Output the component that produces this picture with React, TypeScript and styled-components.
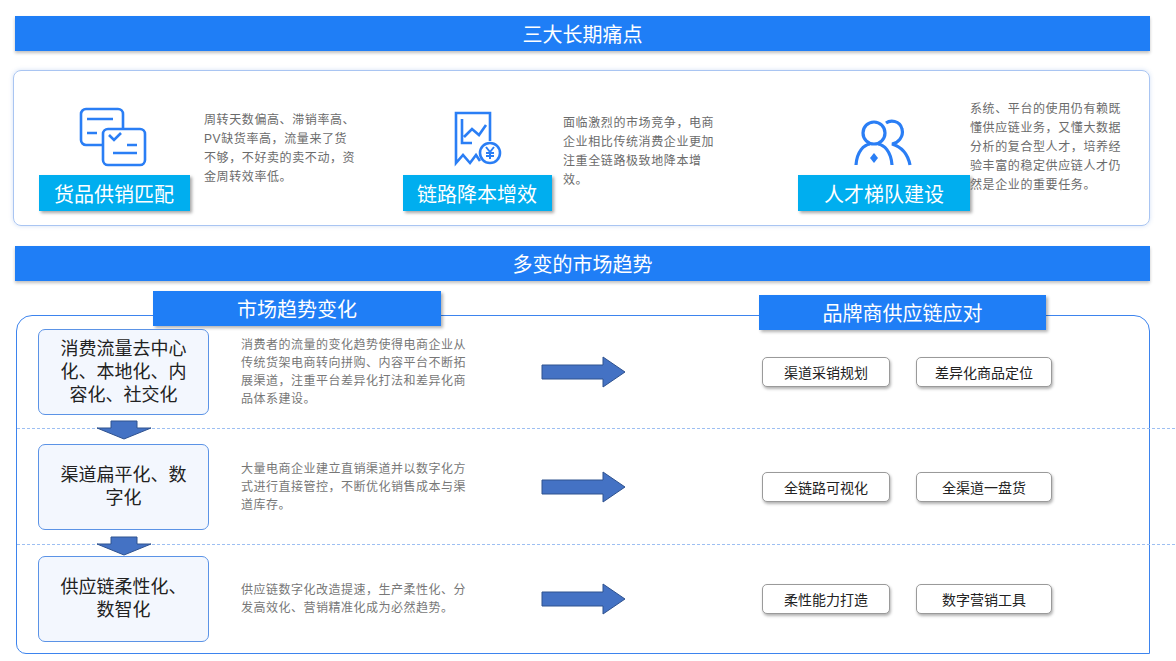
import styled, { createGlobalStyle } from 'styled-components';

const Global = createGlobalStyle`
  html, body { margin: 0; padding: 0; background: #fff; }
  body { font-family: "Liberation Sans", "Noto Sans CJK SC", sans-serif; width: 1176px; height: 661px; overflow: hidden; }
`;

const Page = styled.div`
  padding: 16px 26px 0 13px;
  display: flex;
  flex-direction: column;
`;

const Banner = styled.div<{ $top: number }>`
  margin: ${({ $top }) => $top}px 0 0 2px;
  height: 35px;
  background: #1f7ef6;
  color: #fff;
  font-size: 20px;
  display: flex;
  align-items: center;
  justify-content: center;
  box-shadow: 0 2px 3px rgba(0, 0, 0, 0.25);
`;

const PainPanel = styled.div`
  margin-top: 19px;
  height: 154px;
  border: 1px solid #a9c5f2;
  border-radius: 8px;
  box-shadow: 0 0 4px rgba(80, 130, 220, 0.25);
  display: grid;
  grid-template-columns: 363px 397px 1fr;
  padding-left: 24px;
`;

const PainItem = styled.div<{ $gap: number }>`
  display: flex;
  gap: ${({ $gap }) => $gap}px;
`;

const IconCol = styled.div<{ $w: number }>`
  width: ${({ $w }) => $w}px;
  flex-shrink: 0;
  display: flex;
  flex-direction: column;
  align-items: center;
  justify-content: flex-end;
  padding-bottom: 14px;
`;

const IconWrap = styled.div`
  height: 66px;
  display: flex;
  align-items: flex-end;
  margin-bottom: 8px;
`;

const Label = styled.div<{ $w: number }>`
  width: ${({ $w }) => $w}px;
  height: 36px;
  background: #00aeef;
  color: #fff;
  font-size: 20px;
  display: flex;
  align-items: center;
  justify-content: center;
  box-shadow: 2px 2px 3px rgba(0, 0, 0, 0.35);
`;

const PainText = styled.p<{ $top: number; $w: number }>`
  margin: ${({ $top }) => $top}px 0 0;
  width: ${({ $w }) => $w}px;
  font-size: 12px;
  letter-spacing: 0.6px;
  line-height: 19px;
  color: #6b6b6b;
`;

const TrendPanel = styled.div`
  position: relative;
  margin: 34px 0 8px 3px;
  border: 1px solid #3d84ee;
  border-radius: 16px 16px 0 10px;
  height: 337px;
  display: flex;
  flex-direction: column;
`;

const Tab = styled.div<{ $left: number; $top: number; $w: number }>`
  position: absolute;
  left: ${({ $left }) => $left}px;
  top: ${({ $top }) => $top}px;
  width: ${({ $w }) => $w}px;
  height: 35px;
  background: #1f7ef6;
  color: #fff;
  font-size: 20px;
  display: flex;
  align-items: center;
  justify-content: center;
  box-shadow: 2px 2px 3px rgba(0, 0, 0, 0.3);
`;

const Row = styled.div<{ $h: number; $dashed: boolean }>`
  position: relative;
  height: ${({ $h }) => $h}px;
  display: grid;
  grid-template-columns: 171px 332px 84px 1fr;
  align-items: center;
  padding-left: 21px;
  border-bottom: ${({ $dashed }) => ($dashed ? '1px dashed #9dbff2' : 'none')};
  margin-right: -26px;
`;

const TrendBox = styled.div`
  height: 84px;
  border: 1px solid #5b93e6;
  border-radius: 7px;
  background: #f3f7fe;
  font-size: 18px;
  line-height: 23px;
  color: #222;
  display: flex;
  align-items: center;
  justify-content: center;
  text-align: center;
  padding: 0 14px;
`;

const TrendText = styled.p`
  margin: 0 0 0 32px;
  font-size: 12px;
  letter-spacing: 0.5px;
  line-height: 18px;
  color: #777;
  width: 232px;
`;

const Answers = styled.div`
  display: flex;
  gap: 26px;
  padding-left: 137px;
`;

const Chip = styled.div<{ $w: number }>`
  width: ${({ $w }) => $w}px;
  height: 28px;
  border: 1px solid #9a9a9a;
  border-radius: 5px;
  background: #fff;
  font-size: 14px;
  color: #222;
  display: flex;
  align-items: center;
  justify-content: center;
  box-shadow: 1px 2px 3px rgba(0, 0, 0, 0.3);
`;

const DownArrow = styled.svg`
  position: absolute;
  left: 78px;
  bottom: -12px;
`;

const BottomStrip = styled.div`
  height: 8px;
  background: #eeeeee;
  margin: 0 -26px 0 -13px;
`;

const Arrow = () => (
  <svg width="86" height="32" viewBox="0 0 86 32">
    <path d="M1 9 H62 V1 L84 16 L62 31 V23 H1 Z" fill="#4472c4" stroke="#2f528f" strokeWidth="1" />
  </svg>
);

const rows = [
  {
    h: 112,
    box: '消费流量去中心化、本地化、内容化、社交化',
    text: '消费者的流量的变化趋势使得电商企业从传统货架电商转向拼购、内容平台不断拓展渠道，注重平台差异化打法和差异化商品体系建设。',
    chips: [['渠道采销规划', 126], ['差异化商品定位', 134]],
  },
  {
    h: 115,
    box: '渠道扁平化、数字化',
    text: '大量电商企业建立直销渠道并以数字化方式进行直接管控，不断优化销售成本与渠道库存。',
    chips: [['全链路可视化', 126], ['全渠道一盘货', 134]],
  },
  {
    h: 108,
    box: '供应链柔性化、数智化',
    text: '供应链数字化改造提速，生产柔性化、分发高效化、营销精准化成为必然趋势。',
    chips: [['柔性能力打造', 126], ['数字营销工具', 134]],
  },
];

export default function App() {
  return (
    <>
      <Global />
      <Page>
        <Banner $top={0}>三大长期痛点</Banner>
        <PainPanel>
          <PainItem $gap={14}>
            <IconCol $w={152}>
              <IconWrap>
                <svg width="70" height="60" viewBox="0 0 70 60" fill="none" stroke="#2a7ef5" strokeWidth="2.6">
                  <rect x="2" y="2" width="42" height="36" rx="5" />
                  <rect x="24" y="22" width="42" height="36" rx="5" fill="#fff" />
                  <path d="M8 12 H34 M8 26 H18 M30 28 L35 33 L42 26 M48 38 H58 M34 46 H58" />
                </svg>
              </IconWrap>
              <Label $w={151}>货品供销匹配</Label>
            </IconCol>
            <PainText $top={40} $w={152}>周转天数偏高、滞销率高、PV缺货率高，流量来了货不够，不好卖的卖不动，资金周转效率低。</PainText>
          </PainItem>
          <PainItem $gap={10}>
            <IconCol $w={152}>
              <IconWrap>
                <svg width="50" height="56" viewBox="0 0 50 56" fill="none" stroke="#2a7ef5" strokeWidth="2.6">
                  <path d="M28 50 L24 44 L18 52 L11 44 L4 52 V2 H38 V30" />
                  <path d="M10 8 V32 H20 M12 26 L20 18 L27 24 L34 14" />
                  <circle cx="38" cy="42" r="10" fill="#fff" />
                  <path d="M34 36 L38 41 L42 36 M38 41 V48 M34 42 H42 M34 45 H42" strokeWidth="2" />
                </svg>
              </IconWrap>
              <Label $w={149}>链路降本增效</Label>
            </IconCol>
            <PainText $top={43} $w={158}>面临激烈的市场竞争，电商企业相比传统消费企业更加注重全链路极致地降本增效。</PainText>
          </PainItem>
          <PainItem $gap={-13}>
            <IconCol $w={172}>
              <IconWrap>
                <svg width="60" height="50" viewBox="0 0 60 50" fill="none" stroke="#2a7ef5" strokeWidth="3.2">
                  <circle cx="20" cy="16" r="11" />
                  <path d="M2 48 C3 34 10 28 16 27 M24 27 C30 28 37 34 38 48" />
                  <path d="M32 6 C36 3 46 3 48 12 C50 20 44 26 38 27 C48 30 54 38 56 48" />
                  <path d="M20 36 L24 41 L20 46 L16 41 Z" fill="#2a7ef5" stroke="none" />
                </svg>
              </IconWrap>
              <Label $w={172}>人才梯队建设</Label>
            </IconCol>
            <PainText $top={29} $w={154}>系统、平台的使用仍有赖既懂供应链业务，又懂大数据分析的复合型人才，培养经验丰富的稳定供应链人才仍然是企业的重要任务。</PainText>
          </PainItem>
        </PainPanel>

        <Banner $top={20}>多变的市场趋势</Banner>
        <TrendPanel>
          <Tab $left={136} $top={-25} $w={288}>市场趋势变化</Tab>
          <Tab $left={742} $top={-21} $w={287}>品牌商供应链应对</Tab>
          {rows.map((r, i) => (
            <Row key={i} $h={r.h} $dashed={i < 2}>
              <TrendBox>{r.box}</TrendBox>
              <TrendText>{r.text}</TrendText>
              <Arrow />
              <Answers>
                {r.chips.map(([t, w]) => (
                  <Chip key={t as string} $w={w as number}>{t}</Chip>
                ))}
              </Answers>
              {i < 2 && (
                <DownArrow width="58" height="20" viewBox="0 0 58 20">
                  <path d="M16 1 H42 V8 H56 L29 19 L2 8 H16 Z" fill="#4472c4" stroke="#2f528f" strokeWidth="1" />
                </DownArrow>
              )}
            </Row>
          ))}
        </TrendPanel>
        <BottomStrip />
      </Page>
    </>
  );
}
